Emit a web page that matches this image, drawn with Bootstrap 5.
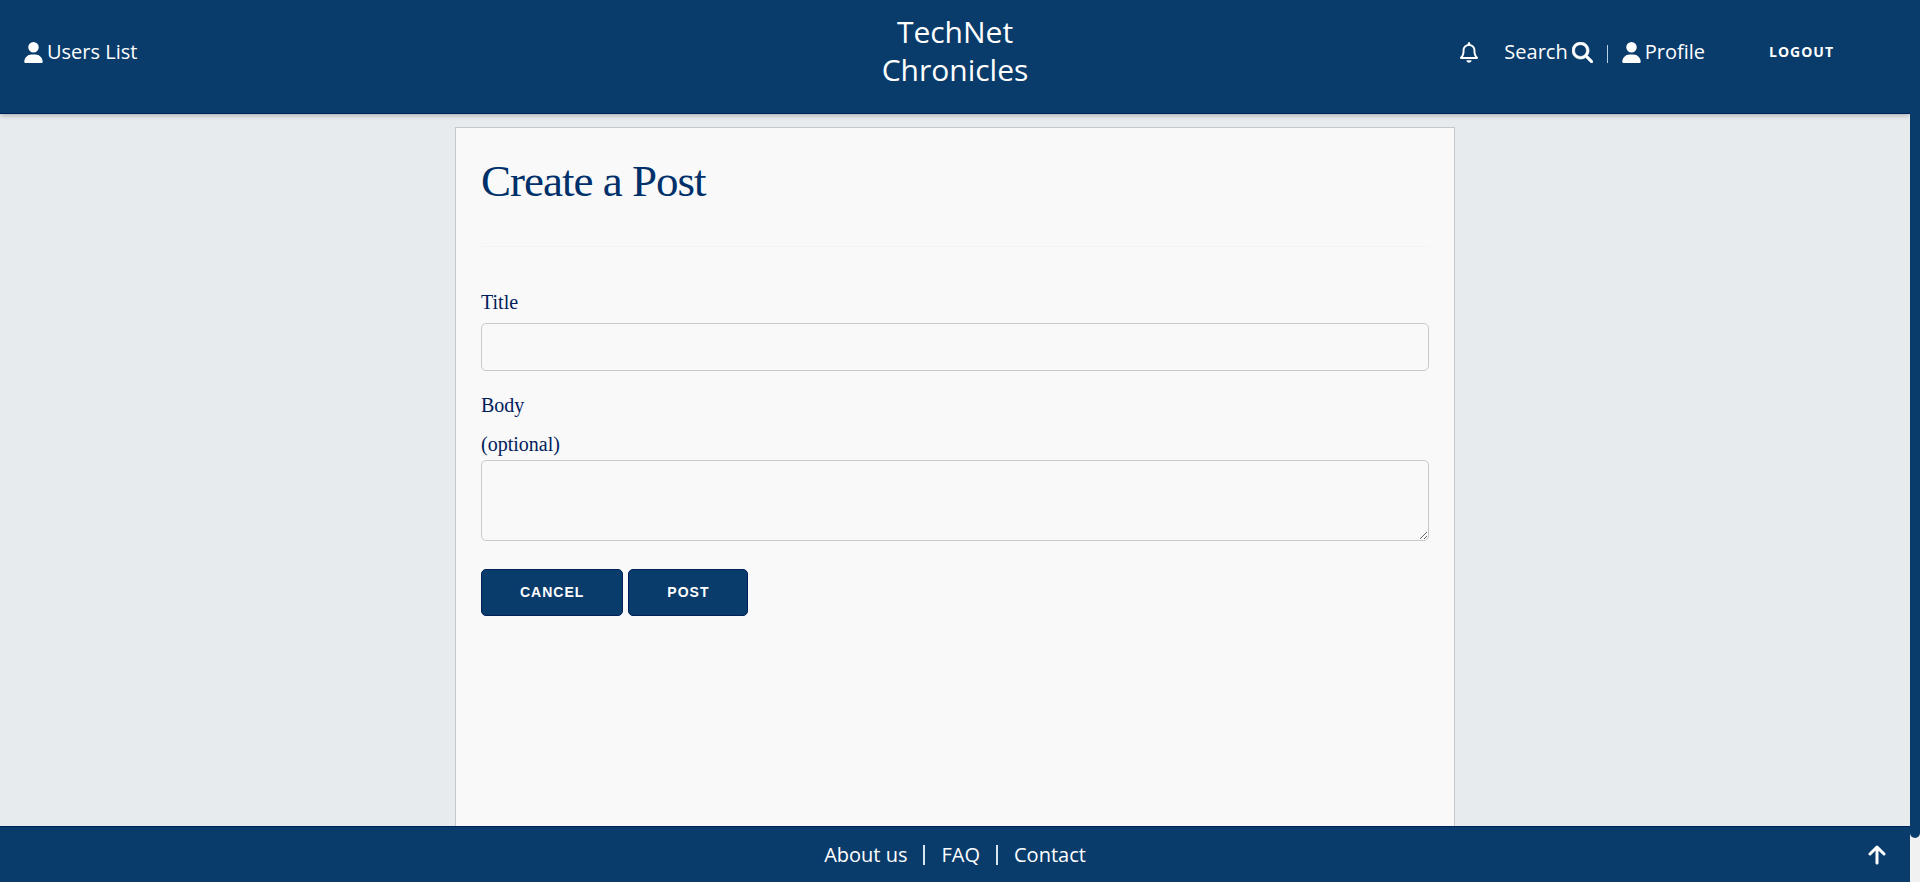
<!DOCTYPE html>
<html lang="en">
<head>
<meta charset="utf-8">
<meta name="viewport" content="width=device-width, initial-scale=1">
<title>TechNet Chronicles</title>
<link rel="stylesheet" href="https://cdn.jsdelivr.net/npm/bootstrap@5.3.0/dist/css/bootstrap.min.css">
<style>
  :root { --navy: #093c6b; --ink: #00205c; --line: #c6c9cc; }
  body { background: #e7ebee; font-family: "Open Sans", "Noto Sans", sans-serif; font-size: 20px; line-height: 24px; }
  a { color: #fff; text-decoration: none; }
  svg { fill: currentColor; display: block; }
  .bar { background: var(--navy); color: #fff; }
  .top-bar { min-height: 114px; padding: 12px 24px 0; border-bottom: 1px solid var(--ink); box-shadow: 0 1px 5px rgba(0,0,0,.3); z-index: 1; }
  .side { flex: 1 1 0; min-height: 80px; }
  .brand-name { font-size: 30px; line-height: 38px; padding-top: 1px; }
  .icon-text { display: flex; align-items: center; gap: 4px; }
  .bell { padding: 0 26px; }
  .split { width: 1px; height: 18px; background: #b5d3e6; margin: 4px 14px 0; }
  .logout { font-size: 14px; font-weight: 700; letter-spacing: 1px; color: #fff; background: none; border: 0; padding: 0; margin: 0 52px 0 64px; }
  .sheet { width: 100%; max-width: 1000px; background: #f9f9f9; border: 1px solid var(--line); border-bottom: 0; margin-top: 13px; padding: 26px 25px 25px; font-family: "Liberation Serif", serif; color: var(--ink); }
  .sheet h1 { font-size: 45px; line-height: 54px; letter-spacing: -1px; font-weight: 400; color: #00306a; margin: 0; }
  .sheet hr { border-color: #e0e0e0; margin: 38px 0 36px; opacity: 0.2; }
  .sheet label { line-height: 39px; display: block; }
  .title-label { margin-bottom: 1px; }
  .hint { display: block; line-height: 31px; margin-top: 4px; }
  .sheet .form-control { background: transparent; border: 1px solid #c9c9c9; border-radius: 5px; box-shadow: none; }
  .title-box { height: 48px; margin-bottom: 15px; }
  .body-box { height: 81px; min-height: 81px; margin-bottom: 28px; }
  .actions { gap: 5px; }
  .btn-post { background: var(--navy); color: #fff; border: 1px solid var(--ink); border-radius: 5px; font: 700 14px/45px "Liberation Sans", sans-serif; letter-spacing: 1px; padding: 0 38px; }
  .foot-bar { min-height: 56px; border-top: 1px solid var(--ink); padding: 0 24px; }
  .foot-links { gap: 16px; }
  .foot-split { width: 2px; height: 20px; background: #d5e5f2; }
  .track { width: 10px; background: #f1f1f1; }
  .thumb { height: 95%; background: var(--navy); border-radius: 0 0 5px 5px; }
</style>
</head>
<body>
<div class="d-flex vh-100">
  <div class="d-flex flex-column flex-grow-1 overflow-hidden">
    <header class="bar top-bar d-flex align-items-start position-relative">
      <nav class="side d-flex align-items-center">
        <a href="#" class="icon-text">
          <svg width="19" height="21" viewBox="0 0 448 512" aria-hidden="true"><path d="M224 256A128 128 0 1 0 224 0a128 128 0 1 0 0 256zm-46 48C80 304 0 384 0 482C0 499 13 512 30 512H418c17 0 30-13 30-30C448 384 368 304 270 304H178z"/></svg>
          Users List</a>
      </nav>
      <a href="#" class="brand-name text-center">TechNet<br>Chronicles</a>
      <nav class="side d-flex align-items-center justify-content-end">
        <a href="#" class="bell" aria-label="Notifications"><svg width="18" height="21" viewBox="0 0 448 512" aria-hidden="true"><path d="M224 0c-18 0-32 14-32 32V50C120 61 64 124 64 200v33c0 46-15 90-44 125L5 377c-6 7-7 17-3 25S15 416 24 416H424c9 0 18-5 22-14s3-18-3-25l-15-19C400 323 384 279 384 233V200c0-76-56-139-128-150V32c0-18-14-32-32-32zm0 96h8c57 0 104 47 104 104v33c0 48 14 95 40 135H72C98 328 112 281 112 233V200c0-57 47-104 104-104h8zm64 352H160c0 17 7 33 19 45s28 19 45 19s33-7 45-19s19-28 19-45z"/></svg></a>
        <a href="#" class="icon-text">Search
          <svg width="21" height="21" viewBox="0 0 512 512" aria-hidden="true"><path d="M416 208c0 46-15 88-40 123L503 457c12 13 12 33 0 46s-33 12-46 0L331 376c-35 25-77 40-123 40C93 416 0 323 0 208S93 0 208 0S416 93 416 208zM208 352a144 144 0 1 0 0-288 144 144 0 1 0 0 288z" stroke="currentColor" stroke-width="14"/></svg></a>
        <span class="split"></span>
        <a href="#" class="icon-text">
          <svg width="19" height="21" viewBox="0 0 448 512" aria-hidden="true"><path d="M224 256A128 128 0 1 0 224 0a128 128 0 1 0 0 256zm-46 48C80 304 0 384 0 482C0 499 13 512 30 512H418c17 0 30-13 30-30C448 384 368 304 270 304H178z"/></svg>
          Profile</a>
        <button type="button" class="logout">LOGOUT</button>
      </nav>
    </header>

    <main class="flex-grow-1 d-flex justify-content-center overflow-hidden">
      <form class="sheet">
        <h1>Create a Post</h1>
        <hr>
        <label for="title" class="title-label">Title</label>
        <input id="title" type="text" class="form-control title-box">
        <label for="body">Body <span class="hint">(optional)</span></label>
        <textarea id="body" class="form-control body-box"></textarea>
        <div class="d-flex actions">
          <button type="button" class="btn-post">CANCEL</button>
          <button type="button" class="btn-post">POST</button>
        </div>
      </form>
    </main>

    <footer class="bar foot-bar d-flex align-items-center">
      <div class="flex-fill w-25"></div>
      <nav class="d-flex align-items-center foot-links">
        <a href="#" class="text-nowrap">About us</a><span class="foot-split"></span><a href="#">FAQ</a><span class="foot-split"></span><a href="#">Contact</a>
      </nav>
      <div class="flex-fill w-25 d-flex">
        <a href="#" class="ms-auto" aria-label="Back to top"><svg width="18" height="20" viewBox="0 0 18 20" aria-hidden="true"><path d="M9 18V3M2 9L9 2L16 9" fill="none" stroke="currentColor" stroke-width="3" stroke-linecap="round" stroke-linejoin="round"/></svg></a>
      </div>
    </footer>
  </div>
  <div class="track" aria-hidden="true"><div class="thumb"></div></div>
</div>
<script src="https://cdn.jsdelivr.net/npm/bootstrap@5.3.0/dist/js/bootstrap.bundle.min.js"></script>
</body>
</html>
